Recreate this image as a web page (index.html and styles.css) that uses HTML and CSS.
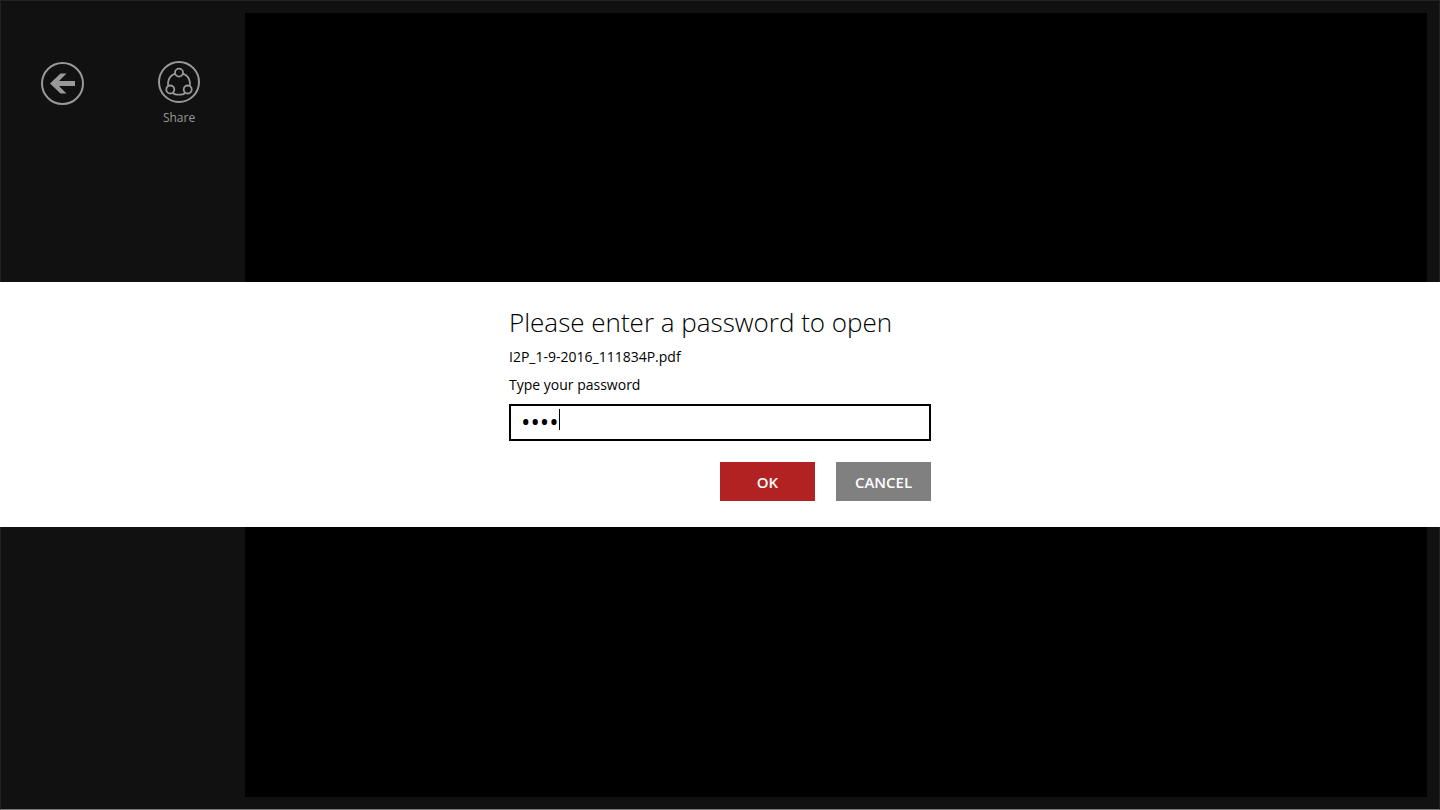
FILE: index.html
```html
<!DOCTYPE html>
<html lang="en">
<head>
  <meta charset="UTF-8">
  <meta name="viewport" content="width=device-width, initial-scale=1">
  <title>Password</title>
  <link rel="stylesheet" href="styles.css">
</head>
<body>
  <div class="viewer">
    <nav class="sidebar">
      <button class="tool" type="button" aria-label="Back">
        <svg class="icon" viewBox="0 0 44 44">
          <circle cx="21.5" cy="22.5" r="20.5" fill="none" stroke="currentColor" stroke-width="2"/>
          <path d="M9 22.5L19.5 12.5H25.5L18 20H34V25H18L25.5 32.5H19.5Z" fill="currentColor"/>
        </svg>
      </button>
      <button class="tool" type="button">
        <svg class="icon" viewBox="0 0 44 44" fill="none" stroke="currentColor">
          <circle cx="22" cy="21" r="20" stroke-width="2"/>
          <g stroke-width="1.8">
            <circle cx="22" cy="11.6" r="4"/>
            <circle cx="13.3" cy="28.5" r="4"/>
            <circle cx="30.7" cy="28.5" r="4"/>
            <path d="M18.2 12.6L15 14.2C11.5 17 10.6 19.5 11 24.8M25.8 12.6L29 14.2C32.5 17 33.4 19.5 33 24.8M15.8 31.7C16.8 33.4 18 33.6 20 33.6H24C26 33.6 27.2 33.4 28.2 31.7"/>
          </g>
        </svg>
        <span class="tool-label">Share</span>
      </button>
    </nav>
    <main class="page"></main>
  </div>

  <div class="overlay">
    <form class="dialog" role="dialog" aria-labelledby="title">
      <div class="content">
        <h1 class="title" id="title">Please enter a password to open</h1>
        <p class="text">I2P_1-9-2016_111834P.pdf</p>
        <label class="text" for="password">Type your password</label>
        <div class="field">
          <input class="input" id="password" type="password" value="1234">
          <span class="caret"></span>
        </div>
        <div class="actions">
          <button class="btn btn-ok" type="submit">OK</button>
          <button class="btn btn-cancel" type="button">CANCEL</button>
        </div>
      </div>
    </form>
  </div>
</body>
</html>
```

FILE: styles.css
```css
* {
  box-sizing: border-box;
  margin: 0;
  padding: 0;
}
html, body {
  height: 100%;
}
body {
  font-family: "Open Sans", "Noto Sans", sans-serif;
  background-color: #111;
}
.viewer {
  display: flex;
  height: 100%;
  padding: 12px;
  border: 1px solid #222;
  border-bottom-color: #777;
}
.sidebar {
  display: flex;
  align-items: flex-start;
  width: 232px;
  padding: 48px 0 0 28px;
  gap: 72px;
}
.tool {
  display: flex;
  flex-direction: column;
  align-items: center;
  border: 0;
  font: inherit;
  color: #999;
  background: none;
}
.icon {
  width: 44px;
  height: 44px;
}
.tool-label {
  margin-top: 4px;
  font-size: 12px;
  line-height: 18px;
}
.page {
  flex: 1;
  background-color: #000;
}
/* full width band over the document */
.overlay {
  position: absolute;
  inset: 0;
  display: flex;
  align-items: center;
  padding-bottom: 1px;
}
.dialog {
  width: 100%;
  padding: 21px 0 26px;
  background-color: #fff;
}
.content {
  display: flex;
  flex-direction: column;
  width: 422px;
  margin: 0 auto;
}
.title {
  margin-bottom: 2px;
  font-size: 26px;
  font-weight: 300;
  line-height: 38px;
  white-space: nowrap;
}
.text {
  font-size: 14px;
  line-height: 28px;
}
.field {
  position: relative;
  margin-top: 5px;
}
.input {
  display: block;
  width: 100%;
  height: 37px;
  padding: 0 10px 4px;
  border: 2px solid #000;
  outline: 0;
  font: 25px "Open Sans", sans-serif;
}
.caret {
  position: absolute;
  top: 5px;
  left: 50px;
  width: 1px;
  height: 21px;
  background-color: #000;
}
.actions {
  display: flex;
  justify-content: flex-end;
  gap: 21px;
  margin-top: 21px;
}
.btn {
  width: 95px;
  height: 39px;
  border: 0;
  font: 600 15px "Open Sans", sans-serif;
  color: #fff;
}
.btn-ok {
  background-color: #b22222;
}
.btn-cancel {
  background-color: #808080;
}
```
